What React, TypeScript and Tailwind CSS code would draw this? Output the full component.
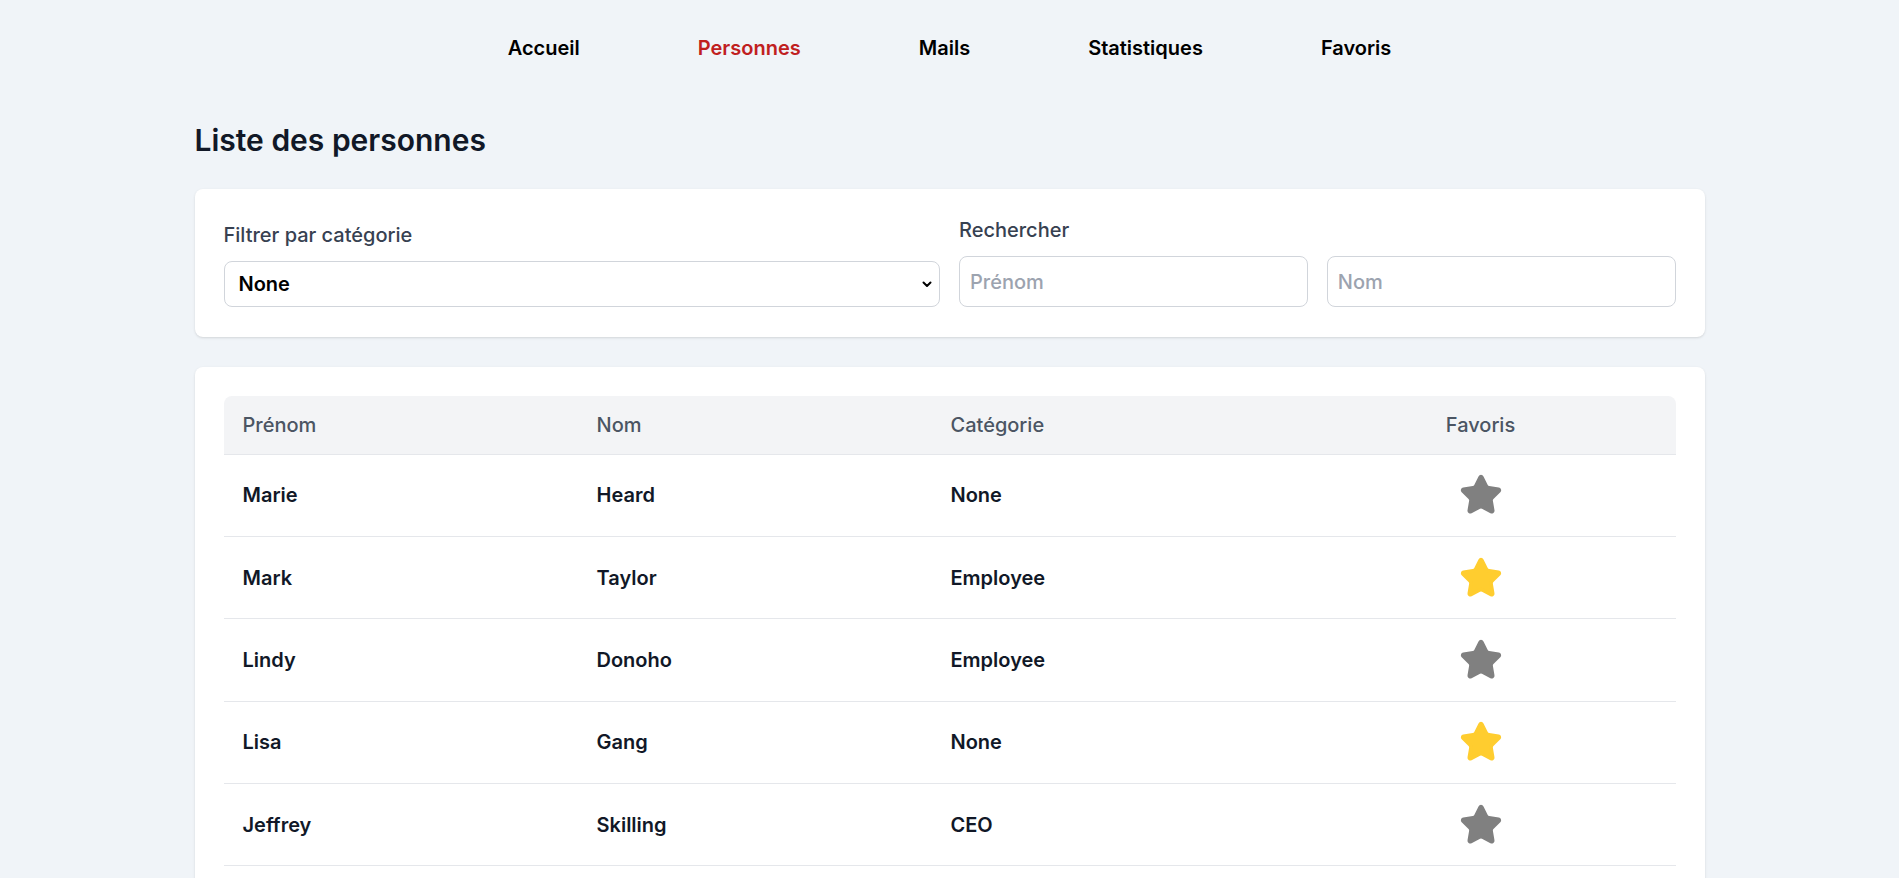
import React from 'react';
import { Star } from 'lucide-react';

const navItems = ['Accueil', 'Personnes', 'Mails', 'Statistiques', 'Favoris'];

const people = [
  { prenom: 'Marie', nom: 'Heard', categorie: 'None', fav: false },
  { prenom: 'Mark', nom: 'Taylor', categorie: 'Employee', fav: true },
  { prenom: 'Lindy', nom: 'Donoho', categorie: 'Employee', fav: false },
  { prenom: 'Lisa', nom: 'Gang', categorie: 'None', fav: true },
  { prenom: 'Jeffrey', nom: 'Skilling', categorie: 'CEO', fav: false },
];

const App = () => {
  return (
    <div className="min-h-screen bg-[#f0f4f8] font-['Inter',sans-serif]">
      {/* Navigation */}
      <nav className="h-[94px] flex items-center justify-center gap-[118px] pt-[2px]">
        {navItems.map((item) => (
          <a
            key={item}
            href="#"
            className={`text-[20px] font-semibold ${item === 'Personnes' ? 'text-[#c0201f]' : 'text-black'}`}
          >
            {item}
          </a>
        ))}
      </nav>

      <main className="max-w-[1510px] mx-auto">
        <h1 className="text-[30px] font-semibold text-[#111827] leading-[36px] mt-[28px] mb-[31px]">
          Liste des personnes
        </h1>

        {/* Filtres */}
        <section className="bg-white rounded-lg shadow-sm p-[29px] pb-[30px] grid grid-cols-2 gap-[19px] items-end">
          <div>
            <label className="block text-[20px] font-medium text-[#374151] leading-6 mb-[14px]">
              Filtrer par catégorie
            </label>
            <div className="relative">
              <select className="appearance-none w-full h-[46px] rounded-lg border border-[#d1d5db] bg-white pl-[14px] text-[20px] font-semibold text-black outline-none">
                <option>None</option>
                <option>Employee</option>
                <option>CEO</option>
              </select>
              <svg
                className="absolute right-[7px] top-1/2 -translate-y-1/2 pointer-events-none"
                width="12"
                height="12"
                viewBox="0 0 12 12"
              >
                <path d="M2.5 4.5 L6 8 L9.5 4.5" fill="none" stroke="black" strokeWidth="2" strokeLinecap="round" strokeLinejoin="round" />
              </svg>
            </div>
          </div>
          <div>
            <label className="block text-[20px] font-medium text-[#374151] leading-6 mb-[14px]">
              Rechercher
            </label>
            <div className="grid grid-cols-2 gap-[19px]">
              <input
                placeholder="Prénom"
                className="h-[51px] rounded-lg border border-[#d1d5db] px-[10px] text-[20px] font-medium placeholder:text-[#9ca3af] outline-none"
              />
              <input
                placeholder="Nom"
                className="h-[51px] rounded-lg border border-[#d1d5db] px-[10px] text-[20px] font-medium placeholder:text-[#9ca3af] outline-none"
              />
            </div>
          </div>
        </section>

        {/* Tableau */}
        <section className="bg-white rounded-lg shadow-sm p-[29px] mt-[30px]">
          <table className="w-full table-fixed border-collapse">
            <colgroup>
              <col className="w-[354px]" />
              <col className="w-[354px]" />
              <col className="w-[354px]" />
              <col />
            </colgroup>
            <thead>
              <tr className="bg-[#f3f4f6] border-b border-[#e5e7eb]">
                <th className="h-[58px] pl-[19px] text-left text-[20px] font-medium text-[#4b5563] rounded-tl-lg">Prénom</th>
                <th className="pl-[19px] text-left text-[20px] font-medium text-[#4b5563]">Nom</th>
                <th className="pl-[19px] text-left text-[20px] font-medium text-[#4b5563]">Catégorie</th>
                <th className="text-center text-[20px] font-medium text-[#4b5563] rounded-tr-lg">Favoris</th>
              </tr>
            </thead>
            <tbody>
              {people.map((p) => (
                <tr key={p.prenom} className="border-b border-[#e5e7eb]">
                  <td className="h-[82.4px] pl-[19px] text-[20px] font-semibold text-[#111827]">{p.prenom}</td>
                  <td className="pl-[19px] text-[20px] font-semibold text-[#111827]">{p.nom}</td>
                  <td className="pl-[19px] text-[20px] font-semibold text-[#111827]">{p.categorie}</td>
                  <td>
                    <div className="flex justify-center">
                      <Star
                        size={44}
                        strokeWidth={2}
                        className={p.fav ? 'text-[#ffcd2f] fill-[#ffcd2f]' : 'text-[#808080] fill-[#808080]'}
                      />
                    </div>
                  </td>
                </tr>
              ))}
            </tbody>
          </table>
        </section>
      </main>
    </div>
  );
};

export default App;
